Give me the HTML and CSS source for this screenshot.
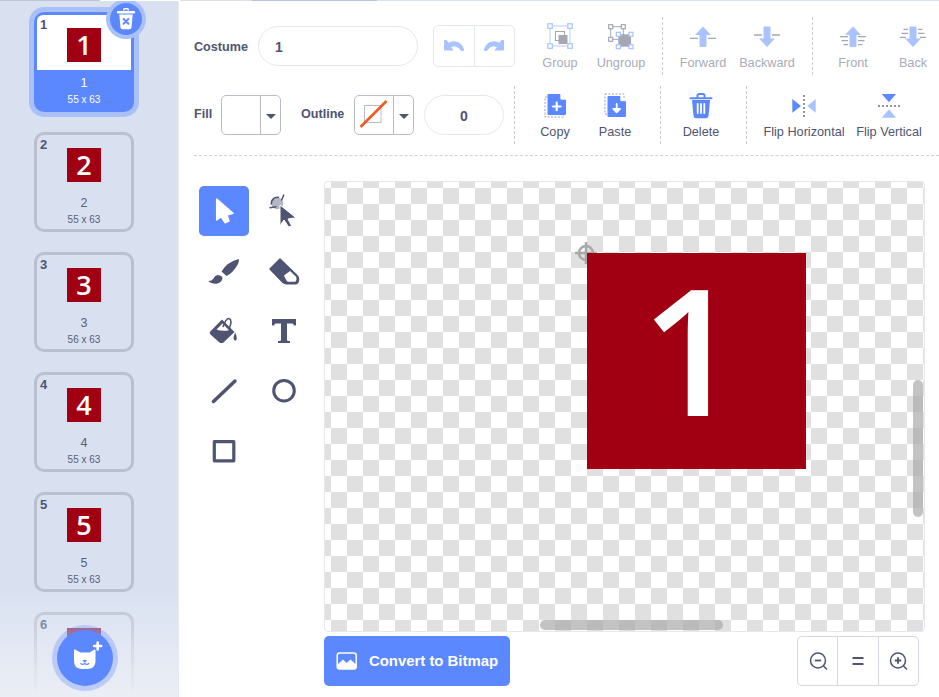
FILE: index.html
```html
<!DOCTYPE html>
<html lang="en">
<head>
<meta charset="utf-8">
<title>Costume editor</title>
<link rel="stylesheet" href="styles.css">
</head>
<body>
<div class="topline"><i class="tl tl-a"></i><i class="tl tl-b"></i><i class="tl tl-c"></i><i class="tl tl-d"></i><i class="tl tl-e"></i></div>
<div class="app">
  <aside class="sidebar">
    <div class="card selected">
      <span class="index">1</span>
      <div class="thumbwrap"><div class="thumb">1</div></div>
      <div class="name">1</div>
      <div class="dims">55 x 63</div>
      <div class="trash">
        <svg width="32" height="32" viewBox="0 0 32 32"><path d="M13 6.500 a1.500 1.500 0 0 1 1.500-1.500 h3 a1.500 1.500 0 0 1 1.500 1.500 v1 h-1.500 v-1 h-3 v1 H13z M8 8 h16 a1 1 0 0 1 0 2.400 H8 a1 1 0 0 1 0-2.400z M9.300 11.500 h13.400 l-1.200 13 a2 2 0 0 1-2 1.700 h-7 a2 2 0 0 1-2-1.700z" fill="#fff"/><path d="M13.600 16 l4.800 4.800 M18.400 16 l-4.800 4.800" stroke="#5c88ff" stroke-width="2" stroke-linecap="round"/></svg>
      </div>
    </div>
    <div class="card"><span class="index">2</span><div class="thumbwrap"><div class="thumb">2</div></div><div class="name">2</div><div class="dims">55 x 63</div></div>
    <div class="card"><span class="index">3</span><div class="thumbwrap"><div class="thumb">3</div></div><div class="name">3</div><div class="dims">56 x 63</div></div>
    <div class="card"><span class="index">4</span><div class="thumbwrap"><div class="thumb">4</div></div><div class="name">4</div><div class="dims">55 x 63</div></div>
    <div class="card"><span class="index">5</span><div class="thumbwrap"><div class="thumb">5</div></div><div class="name">5</div><div class="dims">55 x 63</div></div>
    <div class="card"><span class="index">6</span><div class="thumbwrap"><div class="thumb">6</div></div><div class="name">6</div><div class="dims">55 x 63</div></div>
    <div class="fade"></div>
    <div class="catbtn">
      <svg width="56" height="56" viewBox="0 0 56 56"><path d="M18 19.500 L23.500 22.500 H32.500 L37.500 19.500 Q38.500 19 38.500 20.500 V31 Q38.500 38.500 31 39 H24.500 Q17 38.500 17 31 V20.500 Q17 19 18 19.500z" fill="#fff"/><path d="M26 30.500 h3.500 l-1.750 1.800z" fill="#5c88ff" stroke="#5c88ff" stroke-width="1" stroke-linejoin="round"/><path d="M23.800 33.500 q2 1.800 4 0 q2 1.800 4 0" fill="none" stroke="#5c88ff" stroke-width="1.100" stroke-linecap="round"/><path d="M40.700 12.500 v7 M37.200 16 h7" stroke="#fff" stroke-width="2.600" stroke-linecap="round"/></svg>
    </div>
  </aside>

  <main class="main">
    <header class="toolbar">
      <div class="row row-one">
        <span class="label label-costume">Costume</span>
        <div class="pill pill-name">1</div>
        <div class="segment">
          <div class="seg">
            <svg width="20" height="12" viewBox="0 0 20 12"><path d="M0.500 0.500 V10 H9 L6.500 7 Q10 4.500 14 7 Q16 8.500 17 10.500 H19.500 Q19 5 14 2.500 Q9 0.500 4.500 3.300 L2.500 .5z" fill="#a9c3ff" stroke="#a9c3ff" stroke-linejoin="round"/></svg>
          </div>
          <div class="seg">
            <svg width="20" height="12" viewBox="0 0 20 12"><path d="M19.500 0.500 V10 H11 L13.500 7 Q10 4.500 6 7 Q4 8.500 3 10.500 H0.500 Q1 5 6 2.500 Q11 0.500 15.500 3.300 L17.500 .5z" fill="#a9c3ff" stroke="#a9c3ff" stroke-linejoin="round"/></svg>
          </div>
        </div>
        <div class="btn btn-group off">
          <svg class="ico" viewBox="0 0 28 28"><rect x="4" y="4" width="20" height="20" class="lb"/><rect x="9.500" y="9.500" width="9" height="9" class="gl"/><rect x="12.500" y="13" width="9" height="9" class="gf"/><rect x="1.800" y="1.800" width="4.500" height="4.500" class="sq"/><rect x="21.800" y="1.800" width="4.500" height="4.500" class="sq"/><rect x="1.800" y="21.800" width="4.500" height="4.500" class="sq"/><rect x="21.800" y="21.800" width="4.500" height="4.500" class="sq"/></svg>
          <span>Group</span>
        </div>
        <div class="btn btn-ung off">
          <svg class="ico" viewBox="0 0 28 28"><rect x="3.700" y="4.700" width="12.600" height="12.600" class="gl"/><rect x="11.300" y="12.300" width="12.700" height="12.400" class="gf"/><rect x="1.700" y="2.700" width="4" height="4" class="sqg"/><rect x="14.300" y="2.700" width="4" height="4" class="sqg"/><rect x="1.700" y="15.300" width="4" height="4" class="sqg"/><rect x="9.300" y="10.300" width="4" height="4" class="sq"/><rect x="22" y="10.300" width="4" height="4" class="sq"/><rect x="9.300" y="22.700" width="4" height="4" class="sq"/><rect x="22" y="22.700" width="4" height="4" class="sq"/></svg>
          <span>Ungroup</span>
        </div>
        <div class="sep sep-a"></div>
        <div class="btn off">
          <svg class="ico" viewBox="0 0 28 28"><path d="M14 4.500 L22 13 H17.500 V24 Q17.500 25 16.500 25 H11.500 Q10.500 25 10.500 24 V13 H6z" class="af"/><path d="M1 16.300 H9 M19 16.300 H27" class="ln"/></svg>
          <span>Forward</span>
        </div>
        <div class="btn btn-back off">
          <svg class="ico" viewBox="0 0 28 28"><path d="M14 25 L22 16.500 H17.500 V5.500 Q17.500 4.500 16.500 4.500 H11.500 Q10.500 4.500 10.500 5.500 V16.500 H6z" class="af"/><path d="M1 13 H9 M19 13 H27" class="ln"/></svg>
          <span>Backward</span>
        </div>
        <div class="sep sep-b"></div>
        <div class="btn off">
          <svg class="ico" viewBox="0 0 28 28"><path d="M14 4.500 L22 13 H17.500 V24 Q17.500 25 16.500 25 H11.500 Q10.500 25 10.500 24 V13 H6z" class="af"/><path d="M1 14.700 H9 M19 14.700 H27 M2.500 18.700 H9 M19 18.700 H25.500 M4.500 22.700 H9 M19 22.700 H23.500" class="ln"/></svg>
          <span>Front</span>
        </div>
        <div class="btn off">
          <svg class="ico" viewBox="0 0 28 28"><path d="M14 25 L22 16.500 H17.500 V5.500 Q17.500 4.500 16.500 4.500 H11.500 Q10.500 4.500 10.500 5.500 V16.500 H6z" class="af"/><path d="M4.500 7.300 H9 M19 7.300 H23.500 M2.500 11.300 H9 M19 11.300 H25.500 M1 15.300 H7 M21 15.300 H27" class="ln"/></svg>
          <span>Back</span>
        </div>
      </div>
      <div class="row row-two">
        <span class="label label-fill">Fill</span>
        <div class="swatch">
          <div class="sw-main"></div>
          <div class="sw-caret"><i class="caret"></i></div>
        </div>
        <span class="label label-outline">Outline</span>
        <div class="swatch">
          <div class="sw-main">
            <svg width="30" height="30" viewBox="0 0 30 30"><rect x="5.500" y="5.500" width="16.500" height="17" fill="#fff" stroke="#b9bcc8"/><path d="M1.500 27 L27.500 1" stroke="#f5591f" stroke-width="2.600" fill="none"/></svg>
          </div>
          <div class="sw-caret"><i class="caret"></i></div>
        </div>
        <div class="pill pill-width">0</div>
        <div class="sep sep-c"></div>
        <div class="btn on">
          <svg class="ico" viewBox="0 0 28 28"><rect x="4" y="5" width="18.500" height="20" class="dash"/><path d="M6.500 3 Q6.500 2 7.500 2 H19 L25 8 V22 Q25 23 24 23 H7.500 Q6.500 23 6.500 22z" class="bl"/><path d="M19.800 2 V7.200 H25" fill="#fff" stroke="#fff" stroke-width=".8"/><path d="M15.700 10.700 V18.200 M12 14.500 H19.500" stroke="#fff" stroke-width="2.200" stroke-linecap="round"/></svg>
          <span>Copy</span>
        </div>
        <div class="btn on">
          <svg class="ico" viewBox="0 0 28 28"><rect x="4" y="2" width="19" height="20" class="dash"/><path d="M6.500 5 Q6.500 4 7.500 4 H19 L25 9.500 V24 Q25 25 24 25 H7.500 Q6.500 25 6.500 24z" class="bl"/><path d="M19.800 3.500 V8.700 H25.500" fill="#fff" stroke="#fff" stroke-width=".8"/><path d="M15.700 12 V18 M12.300 16.800 L15.700 20.300 L19 16.800z" stroke="#fff" stroke-width="1.800" fill="#fff" stroke-linejoin="round" stroke-linecap="round"/></svg>
          <span>Paste</span>
        </div>
        <div class="sep sep-d"></div>
        <div class="btn on">
          <svg class="ico" viewBox="0 0 28 28"><path d="M10.500 5 V3.500 Q10.500 2 12 2 H16 Q17.500 2 17.500 3.500 V5 M3.500 6.300 H24.500" stroke="#5c88ff" stroke-width="2" fill="none" stroke-linecap="round"/><path d="M5 8 H23 L21.500 24 Q21.200 26.300 19 26.300 H9 Q6.800 26.300 6.500 24z" class="bl"/><path d="M10.700 12 V21 M14 12 V21 M17.300 12 V21" stroke="#fff" stroke-width="1.800" stroke-linecap="round"/></svg>
          <span>Delete</span>
        </div>
        <div class="sep sep-e"></div>
        <div class="btn btn-fh on">
          <svg class="ico" viewBox="0 0 28 28"><path d="M2.300 7 V20.700 L11 14z" class="bl"/><path d="M25.700 7 V20.700 L17.300 14z" class="af"/><path d="M14 3 V25" stroke="#8e93a6" stroke-width="2" stroke-dasharray="2 2"/></svg>
          <span>Flip Horizontal</span>
        </div>
        <div class="btn btn-fv on">
          <svg class="ico" viewBox="0 0 28 28"><path d="M6.700 2 H21 L14 10.300z" class="bl"/><path d="M6.700 25.700 H21 L14 17.300z" class="af"/><path d="M3 14 H25" stroke="#8e93a6" stroke-width="2" stroke-dasharray="2 2"/></svg>
          <span>Flip Vertical</span>
        </div>
      </div>
    </header>

    <section class="workspace">
      <div class="tools">
        <div class="tool active">
          <svg viewBox="0 0 50 50"><path d="M17.700 13 L34 27.300 L28 29 L30 35 L26 36.700 L22 30.700 L17.700 34z" fill="#fff" stroke="#fff" stroke-width="1.500" stroke-linejoin="round"/></svg>
        </div>
        <div class="tool">
          <svg viewBox="0 0 50 50"><circle cx="18.300" cy="17.300" r="6" fill="#b5b7c3"/><path d="M12.500 18.500 A6 6 0 0 1 20 11.500" fill="none" stroke="#4f5472" stroke-width="1.600"/><path d="M11 21.700 L17 20.700 M24.700 9 L22.700 14" stroke="#4f5472" stroke-width="1.500" stroke-linecap="round"/><path d="M21 19 L37 31.700 L29 33 L32.700 40 L29.700 41 L25 34 L21 39.700z" fill="#4f5472" stroke="#fff" stroke-width="1" stroke-linejoin="round"/></svg>
        </div>
        <div class="tool">
          <svg viewBox="0 0 50 50"><path d="M39.500 13 Q40.500 14 39 18 Q34 27 27.500 30 L22.500 25.500 Q28 16 39.500 13z" fill="#4f5472"/><path d="M9.500 35 Q13 35 14.500 32.500 Q15.500 29.500 19 29 Q23 29.500 23.500 32 Q23 36.500 17.500 37.700 Q12 38 9.500 35z" fill="#4f5472"/></svg>
        </div>
        <div class="tool">
          <svg viewBox="0 0 50 50"><path d="M21 13 L11 23 L24 36.500 Q26 38 28 37.700 L37 37.700 Q39.500 37 39.500 33 Q39.500 31 38 29.500z" fill="#4f5472" stroke="#4f5472" stroke-width="1.500" stroke-linejoin="round"/><path d="M25 29.500 L31 25 L37.300 31 Q38 35 36 35.700 L29 35.700 Q27.500 35.500 25 29.500z" fill="#fff"/></svg>
        </div>
        <div class="tool">
          <svg viewBox="0 0 50 50"><path d="M11 25.700 L23 13.500 L35.500 26 L24.500 36.500 Q22.500 37.500 20.500 36.500 L12 29 Q10 27.500 11 25.700z" fill="#4f5472"/><path d="M17.500 23.500 L23.500 17.500 L30 24.200 Q23 25.500 17.500 23.500z" fill="#fff"/><path d="M24 21 Q27 12 30 12.500 Q34 14 30 23" fill="none" stroke="#4f5472" stroke-width="1.600"/><path d="M36 26.500 Q39 32 37 34.500 Q34.500 35 34.500 31.500z" fill="#4f5472"/></svg>
        </div>
        <div class="tool">
          <svg viewBox="0 0 50 50"><path d="M13 13 H37 V19.500 H35 Q34.500 17.500 33 17.500 H28 V34 Q28 35 29.500 35 H31 V37 H19 V35 H20.500 Q22 35 22 34 V17.500 H17 Q15.500 17.500 15 19.500 H13z" fill="#4f5472"/></svg>
        </div>
        <div class="tool">
          <svg viewBox="0 0 50 50"><path d="M14.500 35.500 L36 15" stroke="#4f5472" stroke-width="3.500" stroke-linecap="round"/></svg>
        </div>
        <div class="tool">
          <svg viewBox="0 0 50 50"><circle cx="25" cy="24.700" r="10.300" fill="none" stroke="#4f5472" stroke-width="3"/></svg>
        </div>
        <div class="tool">
          <svg viewBox="0 0 50 50"><rect x="15.300" y="15.600" width="19.500" height="19.200" fill="none" stroke="#4f5472" stroke-width="3.200" stroke-linejoin="round"/></svg>
        </div>
      </div>
      <div class="stage">
        <div class="canvas">
          <svg class="cross" viewBox="0 0 24 24"><circle cx="12" cy="12" r="7" fill="none" stroke="#a8a8a8" stroke-width="2.500"/><path d="M12 1 V23 M1 12 H23" stroke="#a8a8a8" stroke-width="2.500"/></svg>
          <div class="art"><span class="artnum">1</span></div>
          <div class="vbar"></div>
          <div class="hbar"></div>
        </div>
        <div class="bottom">
          <div class="convert">
            <svg width="22" height="18" viewBox="0 0 22 18"><rect x="1.200" y="1" width="19" height="16" rx="2.500" fill="none" stroke="#fff" stroke-width="1.500"/><path d="M1.500 15 L1.500 12.500 L7 7.500 L10.500 11 L14.500 7.500 L20 12.500 L20 15.500 Q20 17 18.500 17 H3 Q1.500 17 1.500 15z" fill="#fff"/></svg>
            <span>Convert to Bitmap</span>
          </div>
          <div class="zoomgroup">
            <div class="zoombtn"><svg width="22" height="22" viewBox="0 0 22 22"><circle cx="11" cy="10.500" r="7.500" fill="none" stroke="#4f5472" stroke-width="1.500"/><path d="M7.800 10.500 H14.200" stroke="#4f5472" stroke-width="1.800"/><path d="M16.500 16 L20 19.500" stroke="#4f5472" stroke-width="1.600"/></svg></div>
            <div class="zoombtn"><svg width="22" height="22" viewBox="0 0 22 22"><path d="M5.500 8 H16.500 M5.500 14 H16.500" stroke="#4f5472" stroke-width="2"/></svg></div>
            <div class="zoombtn"><svg width="22" height="22" viewBox="0 0 22 22"><circle cx="11" cy="10.500" r="7.500" fill="none" stroke="#4f5472" stroke-width="1.500"/><path d="M7.800 10.500 H14.200 M11 7.300 V13.700" stroke="#4f5472" stroke-width="1.800"/><path d="M16.500 16 L20 19.500" stroke="#4f5472" stroke-width="1.600"/></svg></div>
          </div>
        </div>
      </div>
    </section>
  </main>
</div>
</body>
</html>
```

FILE: styles.css
```css
* { box-sizing: border-box; }
html, body { margin: 0; height: 100%; overflow: hidden; background: #fff; }
body { font-family: "Liberation Sans", Arial, sans-serif; color: #4f5472; }

.topline { display: flex; height: 1px; }
.tl { display: block; height: 1px; }
.tl-a { width: 100px; background: #bfc4d4; }
.tl-b { width: 80px; background: #fff; }
.tl-c { width: 72px; background: #dddfe4; }
.tl-d { width: 125px; background: #b9c4dc; }
.tl-e { flex: 1; background: #d6e1f6; }

.app { display: flex; height: 696px; }

/* sidebar */
.sidebar {
  position: relative;
  flex: none;
  width: 179px;
  height: 696px;
  overflow: hidden;
  padding: 11px 0 0 34px;
  display: flex;
  flex-direction: column;
  gap: 20px;
  background: #d9e1f1;
  border-right: 1px solid #e6eaf4;
}
.card {
  position: relative;
  flex: none;
  width: 100px;
  height: 100px;
  border: 3px solid #b9c0d1;
  border-radius: 10px;
  text-align: center;
  color: #575e75;
}
.index {
  position: absolute;
  left: 3px;
  top: 2px;
  font-size: 13px;
  line-height: 15px;
  font-weight: 700;
  color: #4f5472;
}
.thumbwrap { height: 55px; padding-top: 13px; }
.thumb {
  width: 34px;
  height: 34px;
  margin: 0 auto;
  background: #a00011;
  color: #fff;
  font: 600 27px/33px "Open Sans", sans-serif;
}
.name { margin-top: 6px; font-size: 12.500px; line-height: 14px; }
.dims { margin-top: 4px; font-size: 10px; line-height: 12px; }

.card.selected {
  border-color: #5c88ff;
  background: #5c88ff;
  box-shadow: 0 0 0 5px #a9c1f8;
  color: #fff;
}
.card.selected .thumbwrap { background: #fff; border-radius: 6px 6px 0 0; }
.trash {
  position: absolute;
  right: -11px;
  top: -12px;
  width: 32px;
  height: 32px;
  border-radius: 50%;
  background: #5c88ff;
  box-shadow: 0 0 0 4px #a9c1f8;
}
.trash svg { display: block; }

.fade {
  position: absolute;
  left: 0;
  right: 0;
  bottom: 0;
  height: 110px;
  background: linear-gradient(rgba(233,237,244,0), rgba(235,238,245,1));
}
.catbtn {
  position: absolute;
  left: 57px;
  top: 629px;
  width: 56px;
  height: 56px;
  border-radius: 50%;
  background: #5c88ff;
  box-shadow: 0 0 0 5px rgba(92,136,255,.32);
}
.catbtn svg { display: block; }

/* main */
.main { flex: 1; min-width: 0; overflow: hidden; }

.toolbar {
  margin-left: 15px;
  padding: 16px 0 11px;
  border-bottom: 1px dashed #cfd1d6;
}
.row { display: flex; align-items: center; height: 58px; }
.row-two { margin-top: 11px; }

.label { font-size: 12.600px; font-weight: 700; color: #4f5472; flex: none; }
.label-costume { width: 64px; padding-top: 2px; }
.label-fill { width: 27px; padding-bottom: 2px; }
.label-outline { width: 53px; margin-left: 20px; padding-bottom: 2px; }

.pill {
  flex: none;
  height: 40px;
  border: 1px solid #e4e8f1;
  border-radius: 20px;
  font-size: 14px;
  font-weight: 700;
  line-height: 40px;
  color: #4f5472;
}
.pill-name { width: 160px; padding-left: 16px; }
.pill-width { width: 80px; margin-left: 10px; text-align: center; }

.segment {
  flex: none;
  display: flex;
  width: 82px;
  height: 42px;
  margin-left: 15px;
  border: 1px solid #e4e8f1;
  border-radius: 5px;
}
.seg { flex: 1; display: flex; align-items: center; justify-content: center; }
.seg + .seg { border-left: 1px solid #e4e8f1; }

.btn {
  flex: none;
  width: 60px;
  height: 58px;
  display: flex;
  flex-direction: column;
  align-items: center;
  font-size: 12.700px;
  line-height: 14px;
  white-space: nowrap;
  color: #4f5472;
}
.btn .ico { flex: none; width: 28px; height: 28px; margin-top: 5px; margin-bottom: 6px; }
.btn.off { color: #a8abb8; }
.row-two .btn .ico { margin-top: 6px; margin-bottom: 5px; }
.btn-group { margin-left: 15px; }
.btn-ung { margin-left: 1px; }
.btn-back { margin-left: 4px; }
.btn-fh { width: 80px; margin-left: 17px; }
.btn-fv { width: 64px; margin-left: 13px; }

.sep { flex: none; width: 1px; height: 58px; border-left: 1px dashed #c9ccd3; }
.sep-a { margin: 0 10px 0 11px; }
.sep-b { margin: 0 10px 0 15px; }
.sep-c { margin: 0 10px; }
.sep-d { margin: 0 10px 0 15px; }
.sep-e { margin: 0 0 0 15px; }

.swatch {
  flex: none;
  display: flex;
  width: 60px;
  height: 40px;
  border: 1px solid #b9bcc8;
  border-radius: 5px;
}
.sw-main { width: 38px; display: flex; align-items: center; justify-content: center; }
.sw-caret { flex: 1; border-left: 1px solid #b9bcc8; display: flex; align-items: center; justify-content: center; padding-top: 2px; }
.caret { display: block; width: 0; height: 0; border-left: 5px solid transparent; border-right: 5px solid transparent; border-top: 5px solid #4f5472; }

.lb { fill: none; stroke: #b7cbff; stroke-width: 1; }
.gl { fill: none; stroke: #a5a7b2; stroke-width: 1; }
.gf { fill: #a5a7b2; }
.sq { fill: #fff; stroke: #a9c3ff; stroke-width: 1.200; }
.sqg { fill: #fff; stroke: #a5a7b2; stroke-width: 1.200; }
.af { fill: #a9c3ff; }
.ln { fill: none; stroke: #a5a7b2; stroke-width: 1.300; }
.bl { fill: #5c88ff; }
.dash { fill: none; stroke: #9ea2b0; stroke-width: 1; stroke-dasharray: 2 1.500; }

/* workspace */
.workspace { display: flex; padding: 25px 0 0 20px; }
.tools {
  flex: none;
  display: grid;
  grid-template-columns: 50px 50px;
  grid-auto-rows: 50px;
  gap: 10px;
  margin-top: 5px;
  align-self: flex-start;
}
.tool { width: 50px; height: 50px; border-radius: 5px; }
.tool svg { display: block; width: 50px; height: 50px; }
.tool.active { background: #5c88ff; }

.stage { flex: none; width: 601px; margin-left: 15px; }
.canvas {
  position: relative;
  height: 451px;
  border: 1px solid #e6e8ee;
  border-radius: 4px;
  overflow: hidden;
  background: repeating-conic-gradient(#e0e0e0 0 25%, #fff 0 50%) -10px -10px / 32px 32px;
}
.art {
  position: absolute;
  left: 262px;
  top: 71px;
  width: 219px;
  height: 216px;
  background: #a00011;
  color: #fff;
}
.artnum {
  display: block;
  padding-right: 11px;
  text-align: center;
  font: 600 176px/190px "Open Sans", sans-serif;
}
.cross { position: absolute; left: 249px; top: 59px; width: 24px; height: 24px; }
.vbar {
  position: absolute;
  left: 588px;
  top: 198px;
  width: 10px;
  height: 137px;
  border-radius: 5px;
  background: rgba(172,172,172,.72);
}
.hbar {
  position: absolute;
  left: 215px;
  top: 438px;
  width: 183px;
  height: 10px;
  border-radius: 5px;
  background: rgba(172,172,172,.72);
}

.bottom { display: flex; justify-content: space-between; margin-top: 4px; padding-right: 6px; }
.convert {
  display: flex;
  align-items: center;
  gap: 11px;
  width: 186px;
  height: 50px;
  padding-left: 12px;
  border-radius: 5px;
  background: #5c88ff;
  color: #fff;
  font-size: 14.900px;
  font-weight: 700;
}
.zoomgroup {
  display: flex;
  width: 122px;
  height: 50px;
  border: 1px solid #d5d8e0;
  border-radius: 5px;
}
.zoombtn { flex: 1; display: flex; align-items: center; justify-content: center; }
.zoombtn + .zoombtn { border-left: 1px solid #d5d8e0; }
```
